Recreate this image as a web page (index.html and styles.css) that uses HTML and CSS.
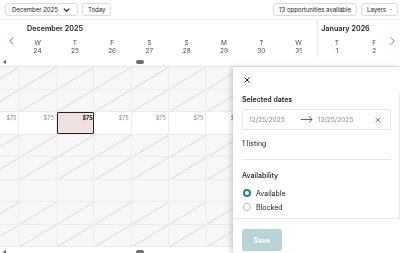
FILE: index.html
```html
<!DOCTYPE html>
<html lang="en">
<head>
    <meta charset="UTF-8">
    <title>Multicalendar</title>
    <meta name="viewport" content="width=device-width, initial-scale=1.0">
    <link rel="stylesheet" href="styles.css">
</head>
<body>

<div class="toolbar">
    <button class="btn btn-month">December 2025
        <svg width="7" height="4" viewBox="0 0 7 4"><path d="M0.8 0.6 L3.5 3.2 L6.2 0.6" fill="none" stroke="#222" stroke-width="1.2"/></svg>
    </button>
    <button class="btn">Today</button>
    <div class="spacer"></div>
    <button class="btn">13 opportunities available</button>
    <button class="btn btn-layers">Layers
        <svg width="5" height="3" viewBox="0 0 5 3"><path d="M0.6 0.5 L2.5 2.4 L4.4 0.5" fill="none" stroke="#222" stroke-width="1"/></svg>
    </button>
</div>

<div class="cal-head">
    <span class="nav prev"><svg width="5" height="8" viewBox="0 0 5 8"><path d="M4.2 0.5 L0.8 4 L4.2 7.5" fill="none" stroke="#4a9097" stroke-width="1"/></svg></span>
    <div class="month dec">
        <div class="month-title">December 2025</div>
        <div class="days">
            <div class="day"><span>W</span><span>24</span></div>
            <div class="day"><span>T</span><span>25</span></div>
            <div class="day"><span>F</span><span>26</span></div>
            <div class="day"><span>S</span><span>27</span></div>
            <div class="day"><span>S</span><span>28</span></div>
            <div class="day"><span>M</span><span>29</span></div>
            <div class="day"><span>T</span><span>30</span></div>
            <div class="day"><span>W</span><span>31</span></div>
        </div>
    </div>
    <div class="month jan">
        <div class="month-title">January 2026</div>
        <div class="days">
            <div class="day"><span>T</span><span>1</span></div>
            <div class="day"><span>F</span><span>2</span></div>
        </div>
    </div>
    <span class="nav next"><svg width="5" height="8" viewBox="0 0 5 8"><path d="M0.8 0.5 L4.2 4 L0.8 7.5" fill="none" stroke="#4a9097" stroke-width="1"/></svg></span>
</div>

<div class="hscroll"><i class="scroll-arrow"></i><i class="thumb"></i></div>

<div class="grid">
    <div class="band hatch"><div class="row"></div><div class="row"></div></div>
    <div class="row prices">
        <div class="cell">$75</div>
        <div class="cell">$75</div>
        <div class="cell selected">$75</div>
        <div class="cell">$75</div>
        <div class="cell">$75</div>
        <div class="cell">$75</div>
        <div class="cell">$75</div>
    </div>
    <div class="band hatch"><div class="row"></div><div class="row"></div></div>
    <div class="row"></div>
    <div class="band hatch"><div class="row"></div><div class="row"></div></div>
</div>

<div class="hscroll"><i class="scroll-arrow"></i><i class="thumb"></i></div>

<aside class="panel">
    <div class="panel-head">
        <svg width="6" height="6" viewBox="0 0 6 6"><path d="M0.5 0.5 L5.5 5.5 M5.5 0.5 L0.5 5.5" stroke="#222" stroke-width="1"/></svg>
    </div>
    <div class="panel-body">
        <h3 class="label">Selected dates</h3>
        <div class="date-range">
            <span class="date">12/25/2025</span>
            <svg class="arrow" width="12" height="7" viewBox="0 0 12 7"><path d="M0 3.5 H11.2 M8 0.5 L11.2 3.5 L8 6.5" fill="none" stroke="#555" stroke-width="0.9"/></svg>
            <span class="date">12/25/2025</span>
            <svg class="clear" width="6" height="6" viewBox="0 0 6 6"><path d="M0.6 0.6 L5.4 5.4 M5.4 0.6 L0.6 5.4" stroke="#777" stroke-width="0.9"/></svg>
        </div>
        <p class="listing">1 listing</p>
        <hr class="divider">
        <h3 class="label avail">Availability</h3>
        <label class="radio"><span class="dot checked"></span>Available</label>
        <label class="radio"><span class="dot"></span>Blocked</label>
    </div>
    <div class="panel-foot">
        <button class="save">Save</button>
    </div>
</aside>

</body>
</html>
```

FILE: styles.css
```css
* { box-sizing: border-box; }
html, body { margin: 0; }
body {
    width: 400px;
    height: 253px;
    overflow: hidden;
    position: relative;
    background: #fff;
    color: #222;
    font-family: Inter, 'Liberation Sans', sans-serif;
}

/* toolbar */
.toolbar {
    height: 20px;
    display: flex;
    gap: 4px;
    padding: 3px 2px 0 5px;
    border-bottom: 1px solid #f2f2f2;
}
.btn {
    height: 13px;
    display: flex;
    align-items: center;
    gap: 4px;
    padding: 0 5px;
    border: 1px solid #dcdcdc;
    border-radius: 3px;
    background: #fff;
    color: #222;
    font-family: Inter, sans-serif;
    font-size: 6px;
}
.btn-month { width: 73px; justify-content: space-between; padding: 0 7px 0 6px; }
.btn-layers { width: 37px; }
.spacer { flex: 1; }

/* month header */
.cal-head {
    height: 37px;
    display: flex;
    position: relative;
    padding-left: 19px;
    will-change: transform;
}
.nav { position: absolute; top: 17px; line-height: 0; }
.nav.prev { left: 9px; }
.nav.next { right: 5px; }
.month { padding-top: 3px; }
.month.dec { width: 299.2px; border-right: 1px solid #e8e8e8; }
.month.jan { flex: 1; }
.month-title {
    font-size: 7.2px;
    font-weight: 600;
    line-height: 12px;
    padding-left: 8px;
}
.jan .month-title { padding-left: 3px; }
.days { display: flex; margin-top: 3.5px; }
.day {
    width: 37.4px;
    display: flex;
    flex-direction: column;
    align-items: center;
    font-size: 6.5px;
    line-height: 8.5px;
    color: #4a4a4a;
}

/* fake scrollbars */
.hscroll {
    height: 10px;
    display: flex;
    align-items: center;
    padding-left: 3px;
    border-bottom: 1px solid #e8e8e8;
}
.scroll-arrow {
    width: 0;
    height: 0;
    border-top: 2px solid transparent;
    border-bottom: 2px solid transparent;
    border-right: 3px solid #555;
}
.thumb {
    width: 8px;
    height: 4px;
    margin-left: 130px;
    border-radius: 3px;
    background: #707070;
}

/* grid */
.grid { margin-left: -18.4px; will-change: transform; }
.row {
    height: 22.5px;
    border-bottom: 1px solid #ececec;
    background-image: linear-gradient(to left, #ececec 1px, transparent 1px);
    background-size: 37.4px 100%;
}
.grid > .row:not(.prices) { background-color: #f7f7f7; }
.band.hatch {
    background-color: #f7f7f7;
    background-image:
        linear-gradient(to bottom right, transparent calc(50% - 0.7px), #d2d2d2 50%, transparent calc(50% + 0.7px)),
        linear-gradient(to bottom right, transparent calc(50% - 0.7px), #d2d2d2 50%, transparent calc(50% + 0.7px));
    background-size: 74.8px 45px;
    background-position: 0 0, 37.4px 0;
}
.row.prices {
    display: flex;
    background: #fff;
}
.cell {
    width: 37.4px;
    flex: none;
    padding: 3px 2px 0 0;
    border-right: 1px solid #ececec;
    text-align: right;
    font-size: 5.5px;
    line-height: 7px;
    color: #8a8a8a;
}
.cell.selected {
    background: #f1e0e0;
    border: 1.5px solid #222;
    border-radius: 1px;
    padding: 1.5px 0.5px 0 0;
    font-weight: 700;
    color: #222;
}

/* side panel */
.panel {
    position: absolute;
    left: 233px;
    top: 67px;
    right: 0;
    bottom: 0;
    display: flex;
    flex-direction: column;
    background: #fff;
    box-shadow: -2px 0 5px rgba(0, 0, 0, 0.18);
}
.panel-head {
    height: 26px;
    display: flex;
    align-items: center;
    padding-left: 11px;
}
.panel-body {
    flex: 1;
    padding: 2px 8px 0 9px;
    border-right: 1px solid #e8e8e8;
}
.label {
    margin: 0 0 4px;
    font-size: 7px;
    font-weight: 600;
    line-height: 10px;
}
.date-range {
    height: 21px;
    display: flex;
    align-items: center;
    padding: 0 9px 0 6px;
    border: 1px solid #e6e6e6;
    border-radius: 2px;
    font-size: 6.6px;
    color: #8c8c8c;
}
.arrow { margin: 0 5px 0 16px; }
.clear { margin-left: auto; }
.listing { margin: 8.5px 0 0; font-size: 7px; line-height: 10px; }
.divider { margin: 10px 0 0; border: 0; border-top: 1px solid #e8e8e8; }
.label.avail { margin: 11px 0 5.5px; font-weight: 500; }
.radio {
    height: 14px;
    display: flex;
    align-items: center;
    gap: 5px;
    padding-left: 1px;
    font-size: 7px;
}
.dot {
    width: 8px;
    height: 8px;
    border: 1px solid #bdbdbd;
    border-radius: 50%;
}
.dot.checked {
    border: 2.5px solid #2f7d84;
    background: #fff;
}
.panel-foot {
    height: 35px;
    padding: 7.5px 9px 0;
    border-top: 1px solid #ebebeb;
}
.save {
    width: 40px;
    height: 22px;
    border: none;
    border-radius: 3px;
    background: #b9d4d6;
    color: #fff;
    font-family: Inter, sans-serif;
    font-size: 7px;
    font-weight: 700;
}
```
